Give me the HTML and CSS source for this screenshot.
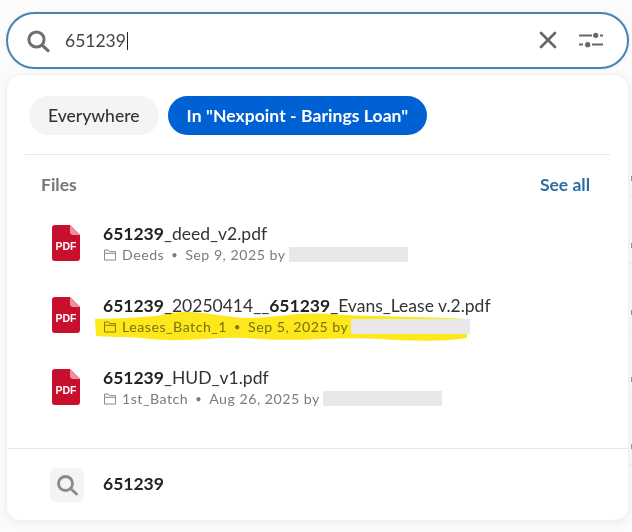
FILE: index.html
```html
<!DOCTYPE html>
<html lang="en">
<head>
<meta charset="utf-8">
<title>Search</title>
<link rel="stylesheet" href="styles.css">
</head>
<body>
<div class="page">
  <div class="behind">
    <div class="behind-row"></div>
    <div class="behind-row"></div>
    <div class="behind-row"></div>
    <div class="behind-row"></div>
    <div class="behind-row"></div>
  </div>
  <div class="searchbar">
    <svg class="search-icon" width="24" height="24" viewBox="0 0 24 24"><circle cx="10.500" cy="10.500" r="7.600" fill="none" stroke="#6f6f6f" stroke-width="3"/><path d="M16 16l6 5.600" stroke="#6f6f6f" stroke-width="3.200" stroke-linecap="round"/></svg>
    <div class="query">651239<span class="caret"></span></div>
    <svg class="clear" width="18" height="18" viewBox="0 0 18 18"><path d="M2 2l14 14M16 2L2 16" stroke="#666" stroke-width="2.600" stroke-linecap="round"/></svg>
    <svg class="filters" width="24" height="18" viewBox="0 0 24 18"><path d="M0 4.500h13M21 4.500h3M0 13.500h4M13 13.500h11" stroke="#666" stroke-width="2"/><circle cx="16.700" cy="4.300" r="2.600" fill="#666"/><circle cx="8.700" cy="13.700" r="2.600" fill="#666"/></svg>
  </div>
  <div class="panel">
    <div class="tabs">
      <div class="tab">Everywhere</div>
      <div class="tab tab-active">In "Nexpoint - Barings Loan"</div>
    </div>
    <div class="section-head">
      <span class="section-title">Files</span>
      <span class="see-all">See all</span>
    </div>
    <div class="results">
      <div class="row">
        <svg class="pdf" width="28" height="36" viewBox="0 0 28 36"><path d="M3 0h15l10 10v23a3 3 0 0 1-3 3H3a3 3 0 0 1-3-3V3a3 3 0 0 1 3-3z" fill="#c8102e"/><path d="M18 0l10 10h-7a3 3 0 0 1-3-3z" fill="#eb8f9d"/><text x="14" y="24.500" class="pdf-label" text-anchor="middle">PDF</text></svg>
        <div class="info">
          <div class="name"><b>651239</b>_deed_v2.pdf</div>
          <div class="meta">
            <svg class="folder" width="14" height="12" viewBox="0 0 14 12"><path d="M1.500 1h3.800l1.200 1.600h6v8.400h-11zM1.500 4.300h11" fill="none" stroke="#8d8d8d"/></svg>
            <span>Deeds</span><span class="dot">•</span><span>Sep 9, 2025 by</span><span class="redact"></span>
          </div>
        </div>
      </div>
      <div class="row">
        <svg class="pdf" width="28" height="36" viewBox="0 0 28 36"><path d="M3 0h15l10 10v23a3 3 0 0 1-3 3H3a3 3 0 0 1-3-3V3a3 3 0 0 1 3-3z" fill="#c8102e"/><path d="M18 0l10 10h-7a3 3 0 0 1-3-3z" fill="#eb8f9d"/><text x="14" y="24.500" class="pdf-label" text-anchor="middle">PDF</text></svg>
        <div class="info">
          <div class="name"><b>651239</b>_20250414__<b>651239</b>_Evans_Lease v.2.pdf</div>
          <div class="meta">
            <svg class="folder" width="14" height="12" viewBox="0 0 14 12"><path d="M1.500 1h3.800l1.200 1.600h6v8.400h-11zM1.500 4.300h11" fill="none" stroke="#8d8d8d"/></svg>
            <span>Leases_Batch_1</span><span class="dot">•</span><span>Sep 5, 2025 by</span><span class="redact"></span>
          </div>
        </div>
      </div>
      <div class="row">
        <svg class="pdf" width="28" height="36" viewBox="0 0 28 36"><path d="M3 0h15l10 10v23a3 3 0 0 1-3 3H3a3 3 0 0 1-3-3V3a3 3 0 0 1 3-3z" fill="#c8102e"/><path d="M18 0l10 10h-7a3 3 0 0 1-3-3z" fill="#eb8f9d"/><text x="14" y="24.500" class="pdf-label" text-anchor="middle">PDF</text></svg>
        <div class="info">
          <div class="name"><b>651239</b>_HUD_v1.pdf</div>
          <div class="meta">
            <svg class="folder" width="14" height="12" viewBox="0 0 14 12"><path d="M1.500 1h3.800l1.200 1.600h6v8.400h-11zM1.500 4.300h11" fill="none" stroke="#8d8d8d"/></svg>
            <span>1st_Batch</span><span class="dot">•</span><span>Aug 26, 2025 by</span><span class="redact"></span>
          </div>
        </div>
      </div>
    </div>
    <div class="footer">
      <div class="footer-icon">
        <svg width="22" height="22" viewBox="0 0 22 22"><circle cx="9.500" cy="9.500" r="7" fill="none" stroke="#8a8a8a" stroke-width="2.800"/><path d="M14.500 14.500l6 5.500" stroke="#8a8a8a" stroke-width="2.800" stroke-linecap="round"/></svg>
      </div>
      <b class="footer-text">651239</b>
    </div>
  </div>
  <svg class="marker" width="632" height="532" viewBox="0 0 632 532"><path d="M95 319C125 318 150 318 172 313C200 309 222 318 250 318C275 318 295 312 330 314C370 317 420 316 467 319L467 338C440 342 410 341 380 339C340 336 300 342 260 339C220 335 190 343 150 339C130 336 110 338 96 336Z" fill="#fde81c"/></svg>
</div>
</body>
</html>
```
FILE: styles.css
```css
* { box-sizing: border-box; }
html, body { margin: 0; padding: 0; }
body {
  width: 632px;
  height: 532px;
  overflow: hidden;
  background: #fbfbfb;
  font-family: Lato, "Liberation Sans", sans-serif;
  color: #222;
}
.page {
  position: relative;
  width: 632px;
  height: 532px;
  padding: 12px 3px 0 6px;
}
.behind {
  position: absolute;
  right: 0;
  top: 130px;
  width: 2px;
}
.behind-row {
  height: 67px;
  border-bottom: 1px solid #e8e8e8;
  background: linear-gradient(#999, #999) 1px 46px / 1px 5px no-repeat;
}
.searchbar {
  display: flex;
  align-items: center;
  height: 57px;
  padding: 0 24px 0 18px;
  background: #fff;
  border: 2px solid #4b83ab;
  border-radius: 29px;
  box-shadow: 0 0 3px #d8ecf8;
}
.search-icon { flex: none; margin-top: 1px; }
.query {
  flex: 1;
  display: flex;
  align-items: center;
  margin-left: 15px;
  font-size: 17.500px;
  color: #444;
}
.caret {
  display: inline-block;
  width: 1px;
  height: 18px;
  margin-left: 1px;
  background: #222;
}
.clear { flex: none; margin-right: 22px; margin-top: -2px; }
.filters { flex: none; margin-top: -2px; }
.panel {
  position: relative;
  height: 447px;
  margin-top: 5px;
  display: flex;
  flex-direction: column;
  background: #fff;
  border: 1px solid #eef1f3;
  border-radius: 14px;
  box-shadow: 0 2px 8px rgba(0, 0, 0, 0.06);
}
.tabs {
  display: flex;
  gap: 9px;
  margin: 21px 18px 0;
  padding: 0 4px 19px;
  border-bottom: 1px solid #e8e8e8;
}
.tab {
  height: 39px;
  padding: 0 19px;
  display: flex;
  align-items: center;
  border-radius: 20px;
  background: #f4f4f4;
  font-size: 17.500px;
  font-weight: 500;
  color: #333;
}
.tab-active {
  background: #0061d5;
  color: #fff;
  font-weight: 700;
  letter-spacing: 0.07px;
}
.section-head {
  display: flex;
  justify-content: space-between;
  align-items: center;
  margin-top: 19px;
  padding: 0 38px 0 34px;
  height: 20px;
  font-size: 17.500px;
  font-weight: 700;
}
.section-title { color: #767676; }
.see-all { color: #2a6fa6; }
.results {
  display: flex;
  flex-direction: column;
  gap: 32px;
  margin-top: 29px;
  padding-left: 45px;
}
.row {
  display: flex;
  align-items: center;
  height: 40px;
}
.pdf { flex: none; }
.pdf-label {
  font-family: "Liberation Sans", sans-serif;
  font-size: 10.500px;
  font-weight: 700;
  fill: #fff;
}
.info { margin: 1px 0 0 23px; }
.name {
  font-size: 17.500px;
  line-height: 21px;
  color: #333;
  white-space: nowrap;
}
.name b { color: #222; font-weight: 700; }
.meta {
  display: flex;
  align-items: center;
  height: 19px;
  margin-top: 1px;
  font-size: 14.200px;
  letter-spacing: 0.5px;
  color: #7b7b7b;
  white-space: nowrap;
}
.folder { margin-right: 5px; }
.dot { margin: 0 7px; font-size: 11px; }
.redact {
  position: relative;
  z-index: 1;
  display: inline-block;
  width: 119px;
  height: 15px;
  margin-left: 3px;
  background: #e8e8e8;
}
.footer {
  margin-top: auto;
  height: 72px;
  display: flex;
  align-items: center;
  padding-left: 43px;
  border-top: 1px solid #e8e8e8;
}
.footer-icon {
  width: 34px;
  height: 34px;
  display: flex;
  align-items: center;
  justify-content: center;
  background: #f4f4f4;
  border-radius: 6px;
}
.footer-text {
  margin: 0 0 2px 19px;
  font-size: 17.500px;
  color: #222;
}
.marker {
  position: absolute;
  left: 0;
  top: 0;
  mix-blend-mode: multiply;
  pointer-events: none;
}
```
